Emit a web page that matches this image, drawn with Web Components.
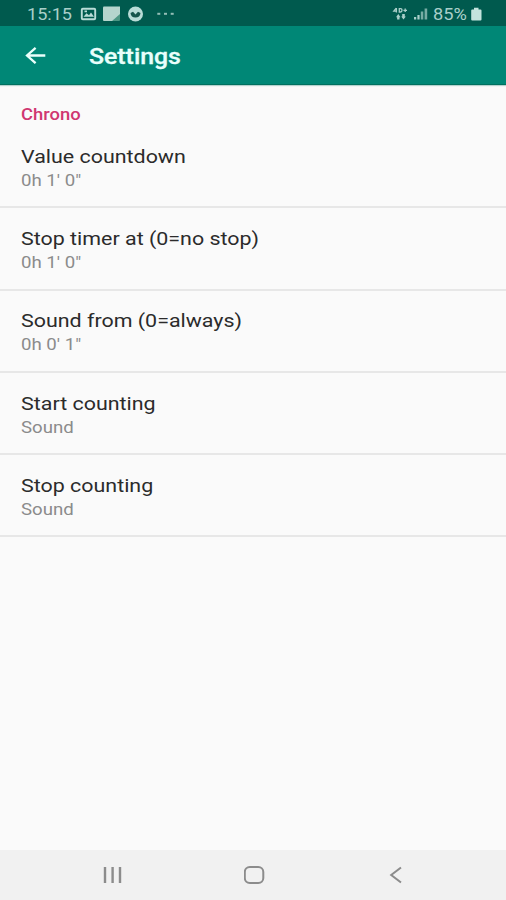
<!DOCTYPE html>
<html lang="en">
<head>
<meta charset="utf-8">
<title>Settings</title>
<style>
    body {
        margin: 0;
        font-family: Roboto, "Liberation Sans", sans-serif;
        background: #fafafa;
    }
</style>
</head>
<body>
<settings-screen>
    <status-bar slot="top" time="15:15" battery="85%"></status-bar>
    <app-bar slot="top">Settings</app-bar>
    <settings-category>Chrono</settings-category>
    <settings-item>Value countdown<span slot="summary">0h 1' 0"</span></settings-item>
    <settings-item>Stop timer at (0=no stop)<span slot="summary">0h 1' 0"</span></settings-item>
    <settings-item>Sound from (0=always)<span slot="summary">0h 0' 1"</span></settings-item>
    <settings-item>Start counting<span slot="summary">Sound</span></settings-item>
    <settings-item>Stop counting<span slot="summary">Sound</span></settings-item>
    <nav-bar slot="bottom"></nav-bar>
</settings-screen>

<script>
/**
 * Build an open shadow root from a string of markup
 */
function attachTemplate(element, html) {
    const template = document.createElement("template");
    template.innerHTML = html;
    element.attachShadow({ mode: "open" }).append(template.content.cloneNode(true));
}

/**
 * Whole screen: bars on top, list in the middle, navigation at the bottom
 */
class SettingsScreen extends HTMLElement {
    constructor() {
        super();
        attachTemplate(this, `
            <style>
                :host {
                    display: flex;
                    flex-direction: column;
                    width: 506px;
                    height: 900px;
                    overflow: hidden;
                    --stretch: 1.18;
                }

                main {
                    flex: 1;
                }
            </style>
            <slot name="top"></slot>
            <main><slot></slot></main>
            <slot name="bottom"></slot>
        `);
    }
}

/**
 * Android status bar with time, notification icons and battery
 */
class StatusBar extends HTMLElement {
    constructor() {
        super();
        attachTemplate(this, `
            <style>
                :host {
                    display: flex;
                    align-items: center;
                    box-sizing: border-box;
                    height: 26px;
                    padding: 2px 23px 0 27px;
                    background: #005a4e;
                    color: #a9cfc9;
                    font-size: 16px;
                    line-height: 25px;
                }

                span {
                    transform: scaleX(1.13);
                    transform-origin: left;
                }

                #time {
                    width: 53px;
                }

                #battery {
                    width: 37px;
                    margin-left: 5px;
                    transform: scaleX(1.14);
                }

                svg {
                    display: block;
                }

                #signal {
                    margin-left: auto;
                }
            </style>
            <span id="time"></span>
            <svg width="96" height="16" viewBox="80 6 96 16">
                <rect x="81.8" y="8.8" width="13.4" height="10.4" rx="1" fill="none" stroke="#b9dcd7" stroke-width="1.9"/>
                <path d="M83.5 16.8l3-3.5 2.5 2 2-2.8 3 4.3zM84.5 10.5h2.5v1.8h-2.5z" fill="#b9dcd7"/>
                <path d="M104 6.5h16v8l-6 6.5h-10q-1 0-1-1V7.5q0-1 1-1z" fill="#b5d5cd"/>
                <path d="M120 14v6q0 1-1 1h-7z" fill="#4b9683"/>
                <circle cx="135.5" cy="14" r="7.5" fill="#b9dcd7"/>
                <path d="M130.5 13l2.5-1.2 2.5 2.8 2.5-2.8 2.5 1.2q-.5 4.5-5 4.5t-5-4.5z" fill="#17554c"/>
                <g fill="#93beb6">
                    <rect x="157.3" y="12.8" width="3" height="2"/>
                    <rect x="164" y="12.8" width="3" height="2"/>
                    <rect x="170.7" y="12.8" width="3" height="2"/>
                </g>
            </svg>
            <svg id="signal" width="36" height="16" viewBox="392 6 36 16" fill="#a9cfc9">
                <path d="M396.4 8v4.5M396.6 11.2h-2.8l2.4-3M399.3 8.6v3.4h1.2q1.5 0 1.5-1.7t-1.5-1.7zM403.4 10.3h3.6M405.2 8.5v3.6" fill="none" stroke="#a9cfc9" stroke-width="1.3"/>
                <path d="M396 17.2l2.3-3.2 2.2 3.2h-1v2.4h-2.4v-2.4zM401.2 16.4h1V14h2.6v2.4h1l-2.3 3.2z"/>
                <path d="M414 17h2.2v2.5H414zM417.4 15h2.2v4.5h-2.2z"/>
                <path d="M420.8 11.5h2.5v8h-2.5zM424.6 8.5h2.6v11h-2.6z" opacity=".7"/>
            </svg>
            <span id="battery"></span>
            <svg width="13" height="16" viewBox="470 6 13 16">
                <path d="M474 7.8h4.5v1.8h2q1 0 1 1v9q0 1-1 1h-8.3q-1 0-1-1v-9q0-1 1-1h1.8z" fill="#c4e3dd"/>
            </svg>
        `);
        this.shadowRoot.querySelector("#time").textContent = this.getAttribute("time");
        this.shadowRoot.querySelector("#battery").textContent = this.getAttribute("battery");
    }
}

/**
 * Toolbar with back arrow and title
 */
class AppBar extends HTMLElement {
    constructor() {
        super();
        attachTemplate(this, `
            <style>
                :host {
                    display: flex;
                    align-items: center;
                    box-sizing: border-box;
                    height: 59px;
                    padding: 0 0 0 25px;
                    background: #008776;
                    border-bottom: 1px solid #00705f;
                    box-shadow: 0 1px 1px #b5d3cf;
                    color: #e9fffb;
                }

                h1 {
                    margin: 4px 0 0 43px;
                    font-size: 21.5px;
                    font-weight: 500;
                    line-height: 28px;
                    -webkit-text-stroke: 0.3px currentColor;
                    transform: scaleX(1.155);
                    transform-origin: left;
                }
            </style>
            <svg width="21" height="18" viewBox="0 0 21 18" fill="none" stroke="currentColor" stroke-width="2.3">
                <path d="M20.3 9.5H2.2M10.6 1.8L2 9.5l8.6 7.7"/>
            </svg>
            <h1><slot></slot></h1>
        `);
    }
}

/**
 * Coloured heading of a group of settings
 */
class SettingsCategory extends HTMLElement {
    constructor() {
        super();
        attachTemplate(this, `
            <style>
                :host {
                    display: block;
                    height: 20px;
                    padding: 20px 0 1px 20.5px;
                    color: #d03670;
                    font-size: 15.6px;
                    font-weight: 500;
                    line-height: 20px;
                }

                div {
                    width: max-content;
                    transform: scaleX(var(--stretch));
                    transform-origin: left;
                }
            </style>
            <div><slot></slot></div>
        `);
    }
}

/**
 * One setting: title with its current value below
 */
class SettingsItem extends HTMLElement {
    constructor() {
        super();
        attachTemplate(this, `
            <style>
                :host {
                    display: block;
                    box-sizing: border-box;
                    height: 82.3px;
                    padding: 18.7px 0 0 20.5px;
                    border-bottom: 2px solid #e7e7e7;
                }

                div {
                    width: max-content;
                    transform: scaleX(var(--stretch));
                    transform-origin: left;
                }

                #title {
                    --stretch: 1.19;
                    color: #2b2b2b;
                    font-size: 18px;
                    line-height: 24px;
                }

                #summary {
                    color: #8b8b8b;
                    font-size: 15.8px;
                    line-height: 23px;
                }
            </style>
            <div id="title"><slot></slot></div>
            <div id="summary"><slot name="summary"></slot></div>
        `);
    }
}

/**
 * System navigation: recents, home, back
 */
class NavBar extends HTMLElement {
    constructor() {
        super();
        attachTemplate(this, `
            <style>
                :host {
                    display: flex;
                    align-items: center;
                    gap: 120px;
                    box-sizing: border-box;
                    height: 50px;
                    padding-left: 102px;
                    background: #f1f1f1;
                }

                svg {
                    fill: none;
                    stroke: #8c8c8c;
                    stroke-width: 2;
                }

                svg:last-of-type {
                    margin-left: 3px;
                }
            </style>
            <svg width="22" height="20" viewBox="0 0 22 20">
                <path d="M3 2v16M10.6 2v16M18 2v16" stroke-width="2.4"/>
            </svg>
            <svg width="22" height="20" viewBox="0 0 22 20">
                <rect x="0.8" y="2" width="18.5" height="16" rx="5"/>
            </svg>
            <svg width="14" height="20" viewBox="0 0 14 20">
                <path d="M12 2.5L2.2 10l9.8 7.5"/>
            </svg>
        `);
    }
}

// register all elements
customElements.define("settings-screen", SettingsScreen);
customElements.define("status-bar", StatusBar);
customElements.define("app-bar", AppBar);
customElements.define("settings-category", SettingsCategory);
customElements.define("settings-item", SettingsItem);
customElements.define("nav-bar", NavBar);
</script>
</body>
</html>
